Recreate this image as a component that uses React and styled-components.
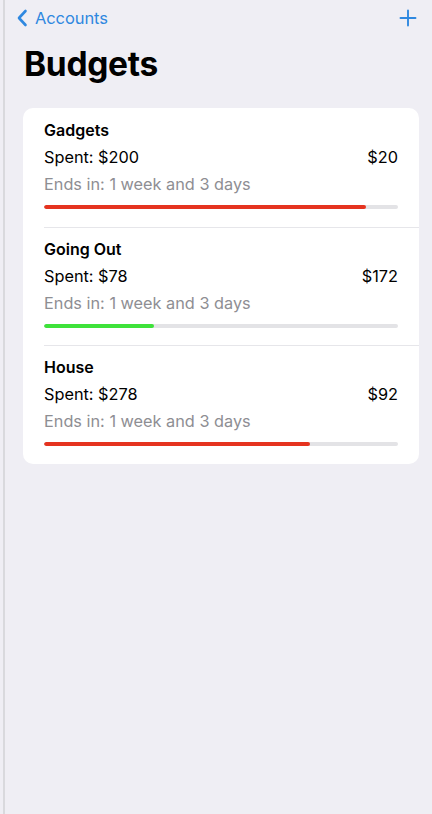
import React from "react";
import styled, { createGlobalStyle } from "styled-components";

const Global = createGlobalStyle`
  html, body { margin: 0; padding: 0; background: #efeef4; }
  body { font-family: Inter, "Noto Sans", "Liberation Sans", sans-serif; -webkit-font-smoothing: antialiased; }
`;

const Screen = styled.div`
  min-height: 814px;
  margin-left: 3px;
  border-left: 2px solid #d9d9dd;
  background: #efeef4;
  box-sizing: border-box;
`;

const NavBar = styled.div`
  display: flex;
  align-items: center;
  justify-content: space-between;
  height: 36px;
  padding: 0 15px 0 11px;
`;

const BackButton = styled.div`
  display: flex;
  align-items: center;
  gap: 7px;
  color: #2f88e0;
  font-size: 16.5px;
  letter-spacing: -0.1px;
`;

const PlusButton = styled.div`
  display: flex;
  align-items: center;
  color: #2f88e0;
`;

const Title = styled.h1`
  margin: 6px 0 0 19px;
  font-size: 33.5px;
  font-weight: 700;
  color: #000;
  letter-spacing: -0.3px;
  line-height: 44px;
`;

const Card = styled.div`
  margin: 22px 13px 0 18px;
  background: #fff;
  border-radius: 10px;
  overflow: hidden;
`;

const Row = styled.div`
  padding: 9px 21px 17.5px 21px;
  position: relative;
  & + &::before {
    content: "";
    position: absolute;
    top: 0;
    left: 21px;
    right: 0;
    height: 1px;
    background: #e6e6ea;
  }
`;

const Name = styled.div`
  font-size: 16px;
  font-weight: 600;
  line-height: 27px;
  color: #000;
`;

const Line = styled.div`
  display: flex;
  justify-content: space-between;
  font-size: 16.3px;
  line-height: 27px;
  color: ${(p) => (p.$muted ? "#8e8e93" : "#000")};
`;

const Track = styled.div`
  margin-top: 7px;
  height: 4px;
  border-radius: 2px;
  background: #e3e3e6;
  overflow: hidden;
`;

const Fill = styled.div`
  height: 100%;
  border-radius: 2px;
  background: ${(p) => p.$color};
`;

const budgets = [
  { name: "Gadgets", spent: 200, left: 20, pct: 91, color: "#e5331f" },
  { name: "Going Out", spent: 78, left: 172, pct: 31, color: "#3ee23a" },
  { name: "House", spent: 278, left: 92, pct: 75, color: "#e5331f" },
];

export default function App() {
  return (
    <>
      <Global />
      <Screen>
        <NavBar>
          <BackButton>
            <svg width="12" height="18" viewBox="0 0 12 18" fill="none">
              <path d="M9.5 2 L3 9 L9.5 16" stroke="#2f88e0" strokeWidth="2.6" strokeLinecap="round" strokeLinejoin="round" />
            </svg>
            Accounts
          </BackButton>
          <PlusButton>
            <svg width="18" height="18" viewBox="0 0 18 18" fill="none">
              <path d="M9 1.5 V16.5 M1.5 9 H16.5" stroke="#2f88e0" strokeWidth="1.9" strokeLinecap="round" />
            </svg>
          </PlusButton>
        </NavBar>
        <Title>Budgets</Title>
        <Card>
          {budgets.map((b) => (
            <Row key={b.name}>
              <Name>{b.name}</Name>
              <Line>
                <span>Spent: ${b.spent}</span>
                <span>${b.left}</span>
              </Line>
              <Line $muted>Ends in: 1 week and 3 days</Line>
              <Track>
                <Fill $color={b.color} style={{ width: `${b.pct}%` }} />
              </Track>
            </Row>
          ))}
        </Card>
      </Screen>
    </>
  );
}
